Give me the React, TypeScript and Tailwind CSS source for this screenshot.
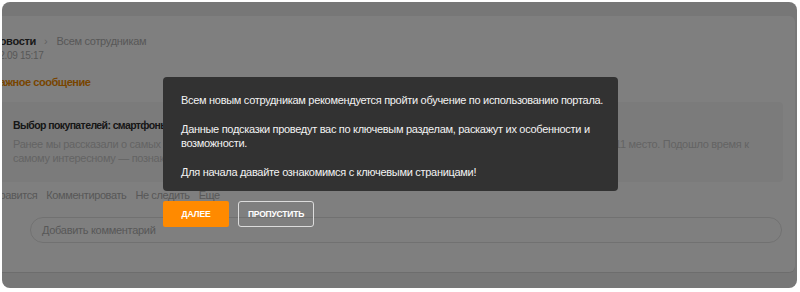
import React from "react";

const font = { fontFamily: '"Liberation Sans", Arial, sans-serif' };

export default function App() {
  return (
    <div className="w-[800px] h-[292px] bg-white overflow-hidden tracking-[-0.3px]" style={font}>
      <div className="relative ml-[2px] mt-[2px] w-[795px] h-[286px] rounded-[8px] overflow-hidden bg-[#eeeeee]">
        {/* page */}
        <div className="pt-[14px]">
          <div className="-ml-[20px] w-[813px] h-[256px] bg-white rounded-[6px] shadow-[0_1px_0_rgba(0,0,0,0.08)] flex flex-col">
            <div className="pl-[20px] pt-[18px] flex flex-col">
              <div className="flex items-center h-[14px] leading-[14px] text-[11px] -ml-[10px]">
                <span className="font-bold text-[#333]">Новости</span>
                <span className="ml-[8px] mr-[9px] text-[#c4c4c4] text-[11px]">›</span>
                <span className="text-[#b0b0b0]">Всем сотрудникам</span>
              </div>
              <div className="mt-[1px] text-[10px] leading-[13px] text-[#b0b0b0] -ml-[8px] h-[13px]">02.09 15:17</div>
              <div className="mt-[13px] text-[11px] leading-[14px] font-bold text-[#f08a00] -ml-[10px] h-[14px] tracking-[-0.45px]">Важное сообщение</div>
              <div className="mt-[13px] -ml-[20px] mr-[12px] h-[80px] bg-[#f7f7f7] rounded-[4px] pl-[31px] pt-[16px]">
                <div className="text-[10.5px] leading-[14px] font-bold text-[#2e2e2e] h-[14px] whitespace-nowrap tracking-[-0.6px]">
                  Выбор покупателей: смартфоны, которые чаще всего дарили на новогодние праздники. Часть II
                </div>
                <div className="mt-[5px] text-[11px] leading-[14px] text-[#c8c8c8] w-[750px]">
                  Ранее мы рассказали о самых популярных смартфонах в новогодние праздники, которые заняли в нашем рейтинге с 20 по 11 место. Подошло время к самому интересному — познакомиться с лидерами.
                </div>
              </div>
              <div className="mt-[6px] flex items-center gap-[9px] text-[11px] leading-[14px] text-[#b0b0b0] h-[14px] -ml-[10px] tracking-[-0.4px]">
                <span>Нравится</span>
                <span>Комментировать</span>
                <span>Не следить</span>
                <span>Еще</span>
              </div>
              <div className="mt-[15px] ml-[28px] mr-[13px] h-[26px] rounded-full border border-[#e2e2e2] flex items-center pl-[11px] text-[11px] text-[#b0b0b0]">
                Добавить комментарий
              </div>
            </div>
          </div>
        </div>
        {/* overlay */}
        <div className="absolute inset-0 bg-black/50" />
        {/* tooltip */}
        <div className="absolute left-[161px] top-[75px] w-[455px] flex flex-col">
          <div className="bg-[#323232] rounded-[4px] pl-[18px] pr-[12px] pt-[16px] pb-[12px] text-[#f2f2f2] text-[11px] leading-[14px] flex flex-col gap-[15px]">
            <p>Всем новым сотрудникам рекомендуется пройти обучение по использованию портала.</p>
            <p>Данные подсказки проведут вас по ключевым разделам, раскажут их особенности и возможности.</p>
            <p>Для начала давайте ознакомимся с ключевыми страницами!</p>
          </div>
          <div className="mt-[10px] flex gap-[9px]">
            <button className="w-[66px] h-[26px] rounded-[2px] bg-[#ff8a00] text-white text-[8.5px] tracking-[-0.1px] font-bold uppercase">Далее</button>
            <button className="w-[76px] h-[26px] rounded-[3px] border border-[#dcdcdc] text-white text-[8.5px] tracking-[-0.2px] font-bold uppercase">Пропустить</button>
          </div>
        </div>
      </div>
    </div>
  );
}
